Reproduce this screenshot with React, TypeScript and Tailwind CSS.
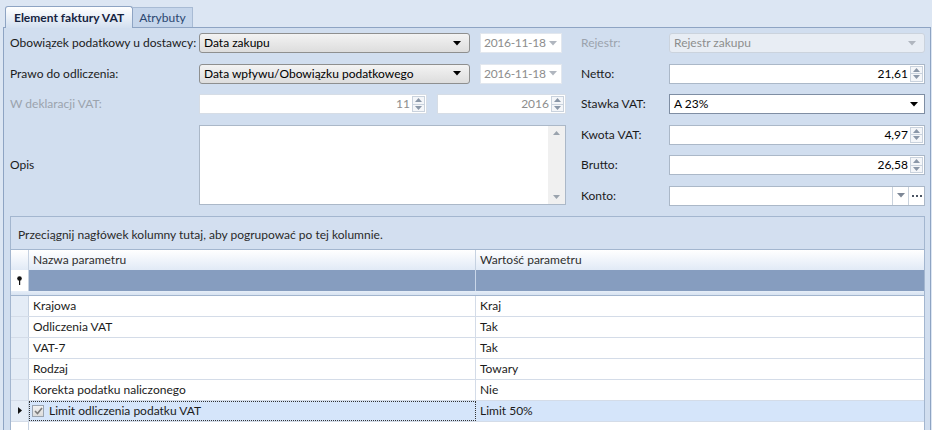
import React from "react";

const Tri = ({ color = "#000" }: { color?: string }) => (
  <svg width="8" height="5" viewBox="0 0 8 5" className="shrink-0">
    <path d="M0 0 H8 L4 4.5 Z" fill={color} />
  </svg>
);

const Spin = () => (
  <div className="flex flex-col w-[13px] h-[16px] border border-[#c9d2dd] bg-[#f4f6f9] ml-[2px] mr-[1px]">
    <div className="flex-1 flex items-center justify-center border-b border-[#c9d2dd]">
      <svg width="7" height="4" viewBox="0 0 7 4"><path d="M0 4 H7 L3.5 0 Z" fill="#8a97a8" /></svg>
    </div>
    <div className="flex-1 flex items-center justify-center">
      <svg width="7" height="4" viewBox="0 0 7 4"><path d="M0 0 H7 L3.5 4 Z" fill="#8a97a8" /></svg>
    </div>
  </div>
);

const Combo = ({ text, w }: { text: string; w: string }) => (
  <div className={`${w} h-[20px] flex items-center justify-between rounded-[3px] border border-[#8e8f8f] bg-gradient-to-b from-[#f3f3f3] to-[#dddddd] pl-[4px] pr-[8px] text-black whitespace-nowrap`}>
    <span>{text}</span>
    <Tri />
  </div>
);

const DateBox = ({ text }: { text: string }) => (
  <div className="w-[82px] h-[20px] flex items-center justify-between bg-white border border-[#e2e7ee] pl-[3px] pr-[4px] text-[#8d8d8d] whitespace-nowrap">
    <span className="tracking-[-0.3px]">{text}</span>
    <Tri color="#b0b6bf" />
  </div>
);

const NumBox = ({ text, w }: { text: string; w: string }) => (
  <div className={`${w} h-[20px] flex items-center justify-end bg-white border border-[#abb8c8] text-black`}>
    <span>{text}</span>
    <Spin />
  </div>
);

const NumBoxDis = ({ text, w }: { text: string; w: string }) => (
  <div className={`${w} h-[20px] flex items-center justify-end bg-white border border-[#d6dde6] text-[#8d8d8d]`}>
    <span>{text}</span>
    <Spin />
  </div>
);

const rows: [string, string][] = [
  ["Krajowa", "Kraj"],
  ["Odliczenia VAT", "Tak"],
  ["VAT-7", "Tak"],
  ["Rodzaj", "Towary"],
  ["Korekta podatku naliczonego", "Nie"],
];

export default function App() {
  return (
    <div
      className="w-[932px] h-[430px] overflow-hidden bg-[#dce6f3] text-[12px] text-[#1b1b1b] flex flex-col whitespace-nowrap"
      style={{ fontFamily: 'Lato, "Noto Sans", sans-serif' }}
    >
      {/* tabs */}
      <div className="h-[27px] flex items-end pl-[5px] shrink-0">
        <div className="h-[22px] px-[8px] flex items-center rounded-t-[3px] border border-b-0 border-[#8ea4c3] bg-gradient-to-b from-[#ffffff] to-[#d3e0f0] font-bold text-[#15233f] relative top-[1px]">
          Element faktury VAT
        </div>
        <div className="h-[20px] px-[6px] flex items-center border border-b-0 border-l-0 border-[#a8bbd4] bg-[#c6d6eb] text-[#2a4670]">
          Atrybuty
        </div>
      </div>
      {/* panel */}
      <div className="flex-1 ml-[3px] mr-[1px] border border-b-0 border-[#8ea4c3] bg-[#d1deef] pl-[6px] pr-[5px] pt-[5px]">
        <div className="flex">
          {/* left block */}
          <div className="flex flex-col w-[556px] gap-y-[10.5px]">
            <div className="flex items-center h-[20px]">
              <div className="w-[189px]">Obowiązek podatkowy u dostawcy:</div>
              <Combo text="Data zakupu" w="w-[271px]" />
              <div className="ml-[10px]"><DateBox text="2016-11-18" /></div>
            </div>
            <div className="flex items-center h-[20px]">
              <div className="w-[189px]">Prawo do odliczenia:</div>
              <Combo text="Data wpływu/Obowiązku podatkowego" w="w-[271px]" />
              <div className="ml-[10px]"><DateBox text="2016-11-18" /></div>
            </div>
            <div className="flex items-center h-[20px]">
              <div className="w-[189px] text-[#9ba3ad]">W deklaracji VAT:</div>
              <NumBoxDis text="11" w="w-[228px]" />
              <div className="ml-[10px]"><NumBoxDis text="2016" w="w-[129px]" /></div>
            </div>
            <div className="flex items-center h-[80px]">
              <div className="w-[189px]">Opis</div>
              <div className="w-[367px] h-[80px] bg-white border border-[#abb8c8] flex justify-end">
                <div className="w-[17px] h-full bg-[#f0f0f0] flex flex-col items-center justify-between py-[5px]">
                  <svg width="7" height="4" viewBox="0 0 7 4"><path d="M0 4 H7 L3.5 0 Z" fill="#9aa3ad" /></svg>
                  <svg width="7" height="4" viewBox="0 0 7 4"><path d="M0 0 H7 L3.5 4 Z" fill="#9aa3ad" /></svg>
                </div>
              </div>
            </div>
          </div>
          {/* right block */}
          <div className="flex flex-col ml-[15px] gap-y-[10.5px]">
            <div className="flex items-center h-[20px]">
              <div className="w-[88px] text-[#9ba3ad]">Rejestr:</div>
              <div className="w-[256px] h-[20px] flex items-center justify-between rounded-[3px] border border-[#cbd3dd] bg-[#e8edf4] pl-[4px] pr-[8px] text-[#8d8d8d]">
                <span>Rejestr zakupu</span>
                <Tri color="#b0b6bf" />
              </div>
            </div>
            <div className="flex items-center h-[20px]">
              <div className="w-[88px]">Netto:</div>
              <NumBox text="21,61" w="w-[256px]" />
            </div>
            <div className="flex items-center h-[20px]">
              <div className="w-[88px]">Stawka VAT:</div>
              <div className="w-[256px] h-[20px] flex items-center justify-between border border-[#7f8ea3] bg-white pl-[4px] pr-[6px] text-black">
                <span>A 23%</span>
                <Tri />
              </div>
            </div>
            <div className="flex items-center h-[20px]">
              <div className="w-[88px]">Kwota VAT:</div>
              <NumBox text="4,97" w="w-[256px]" />
            </div>
            <div className="flex items-center h-[20px]">
              <div className="w-[88px]">Brutto:</div>
              <NumBox text="26,58" w="w-[256px]" />
            </div>
            <div className="flex items-center h-[20px]">
              <div className="w-[88px]">Konto:</div>
              <div className="w-[256px] h-[20px] flex items-stretch border border-[#abb8c8] bg-white">
                <div className="flex-1" />
                <div className="w-[16px] flex items-center justify-center border-l border-[#c9d2dd]">
                  <Tri color="#7d8796" />
                </div>
                <div className="w-[16px] flex items-center justify-center border-l border-[#c9d2dd]">
                  <svg width="10" height="2" viewBox="0 0 10 2">
                    <rect x="0" y="0" width="2" height="2" fill="#4b5563" />
                    <rect x="4" y="0" width="2" height="2" fill="#4b5563" />
                    <rect x="8" y="0" width="2" height="2" fill="#4b5563" />
                  </svg>
                </div>
              </div>
            </div>
          </div>
        </div>
        {/* grid */}
        <div className="mt-[10px] w-[915px] h-[300px] border border-[#a3b6cf] bg-white flex flex-col">
          <div className="h-[33px] bg-[#d3dff0] border-b border-[#a3b6cf] flex items-center pl-[7px] pt-[4px] text-[#2a2a2a]">
            Przeciągnij nagłówek kolumny tutaj, aby pogrupować po tej kolumnie.
          </div>
          <div className="h-[20px] flex bg-gradient-to-b from-[#ffffff] to-[#e1eaf6]">
            <div className="w-[18px] border-r border-[#c6d2e1]" />
            <div className="w-[447px] border-r border-[#c6d2e1] pl-[4px] flex items-center text-[#2e2e2e]">Nazwa parametru</div>
            <div className="flex-1 pl-[4px] flex items-center text-[#2e2e2e]">Wartość parametru</div>
          </div>
          <div className="h-[21px] flex bg-[#869dbf]">
            <div className="w-[18px] bg-white flex items-center justify-center border-r border-[#c6d2e1]">
              <svg width="7" height="9" viewBox="0 0 7 9">
                <circle cx="3.5" cy="2.5" r="2.3" fill="#111" />
                <rect x="3" y="4" width="1.2" height="5" fill="#111" />
              </svg>
            </div>
            <div className="w-[447px] border-r border-[#c9d6e8]" />
            <div className="flex-1" />
          </div>
          <div className="h-[5px] bg-gradient-to-b from-[#e6eef8] to-[#d8e3f1] border-b border-[#a3b6cf]" />
          {rows.map(([a, b]) => (
            <div key={a} className="h-[21px] flex border-b border-[#d4dce8]">
              <div className="w-[18px] bg-[#e4ecf6] border-r border-[#c6d2e1]" />
              <div className="w-[447px] border-r border-[#d4dce8] pl-[4px] flex items-center">{a}</div>
              <div className="flex-1 pl-[4px] flex items-center">{b}</div>
            </div>
          ))}
          <div className="h-[21px] flex border-b border-[#d4dce8] bg-[#d5e5fa]">
            <div className="w-[18px] bg-[#e4ecf6] border-r border-[#c6d2e1] flex items-center justify-center">
              <svg width="4" height="7" viewBox="0 0 4 7"><path d="M0 0 L4 3.5 L0 7 Z" fill="#111" /></svg>
            </div>
            <div className="w-[447px] border border-dotted border-[#333] pl-[2px] flex items-center gap-[5px]">
              <div className="w-[12px] h-[12px] border border-[#9aa4b0] bg-gradient-to-b from-[#f0f0f0] to-[#dcdcdc] flex items-center justify-center">
                <svg width="9" height="8" viewBox="0 0 9 8"><path d="M1 4 L3.5 6.5 L8 1" stroke="#7a7a7a" strokeWidth="1.6" fill="none" /></svg>
              </div>
              <span>Limit odliczenia podatku VAT</span>
            </div>
            <div className="flex-1 pl-[4px] flex items-center">Limit 50%</div>
          </div>
          <div className="flex flex-1">
            <div className="w-[18px] border-r border-[#c6d2e1]" />
          </div>
        </div>
      </div>
    </div>
  );
}
